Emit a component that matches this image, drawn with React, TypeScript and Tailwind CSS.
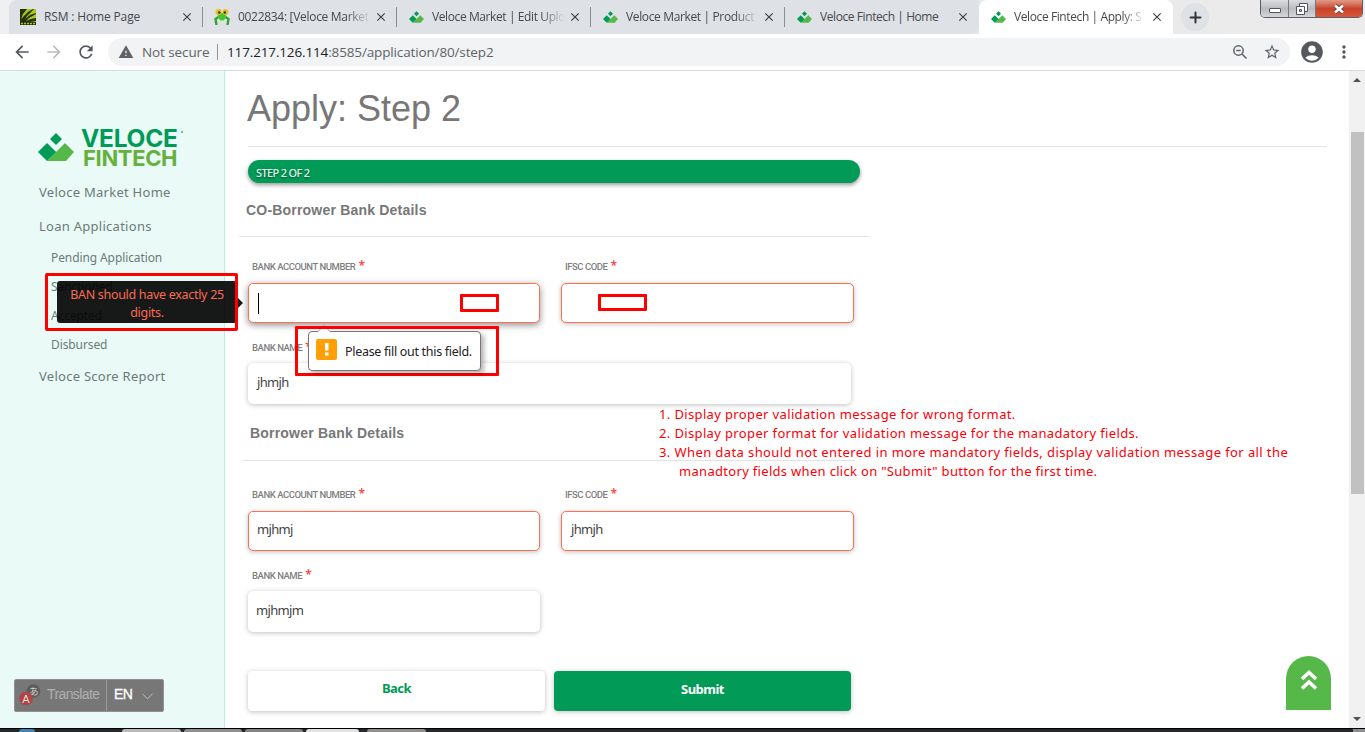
import React from "react";
import { Plus, ChevronDown } from "lucide-react";
import { MdWarning, MdAccountCircle, MdMoreVert, MdArrowBack, MdArrowForward, MdRefresh, MdStarBorder, MdClose } from "react-icons/md";

function VeloceMark({ className }: { className: string }) {
  return (
    <svg viewBox="0 0 36 28" className={className}>
      <path d="M18 0l6 6-6 6-6-6z" fill="#029a57" />
      <path d="M9 28L27 10l9 9-8 9z" fill="#55b848" />
      <path d="M0 19l9-9 9.200 9L9 28z" fill="#029a57" />
    </svg>
  );
}

function LemonIcon() {
  return (
    <svg viewBox="0 0 16 16" className="size-4">
      <path fill="#a8c71a" d="M0 0h16v16H0z" />
      <path fill="#24300a" d="M0 0h7L3 5 1 10l3-3 4-4 5-3h1L7 7 5 10l5-4 6-2v1L9 9l-3 3 5-2 5-1v3l-6 1H0z" />
      <path fill="#26310b" d="M0 13h16v3H0z" />
      <path stroke="#a8c71a" strokeWidth="1.500" d="M1 14.500h2M4 14.500h2M7 14.500h2M10 14.500h2M13 14.500h2" />
    </svg>
  );
}

function MantisIcon() {
  return (
    <svg viewBox="0 0 16 16" className="size-4">
      <path d="M2.500 16L1.500 10l3-2M13.500 16l1-6-3-2" stroke="#35a234" strokeWidth="2.400" fill="none" />
      <path d="M3 4h10l-2 6-3 3-3-3z" fill="#42c72f" />
      <path d="M6 12l2-1 2 1-1 4H7z" fill="#cfe9d0" />
      <circle cx="4.500" cy="3" r="3" fill="#e6c321" />
      <circle cx="11.500" cy="3" r="3" fill="#e6c321" />
      <circle cx="5.200" cy="3.500" r="1.200" fill="#342a08" />
      <circle cx="10.800" cy="3.500" r="1.200" fill="#342a08" />
    </svg>
  );
}

const tabs = [
  { title: "RSM : Home Page", icon: "lemon", spacing: "tracking-[-0.15px]" },
  { title: "0022834: [Veloce Market", icon: "mantis", spacing: "tracking-[-0.3px]" },
  { title: "Veloce Market | Edit Uplo", icon: "veloce", spacing: "tracking-[-0.4px]" },
  { title: "Veloce Market | Product", icon: "veloce", spacing: "tracking-[-0.36px]" },
  { title: "Veloce Fintech | Home", icon: "veloce", spacing: "tracking-[-0.42px]" },
  { title: "Veloce Fintech | Apply: S", icon: "veloce", spacing: "tracking-[-0.4px]", active: true },
];

function TabStrip() {
  return (
    <div className="flex h-[34px] shrink-0 bg-gradient-to-r from-[#eef0f2] via-[#e3e4e6] to-[#ececec] font-['Open_Sans',sans-serif]">
      <div className="flex pl-[9px]">
        {tabs.map((t, i) => (
          <div
            key={t.title}
            className={
              "flex h-[34px] w-[194px] items-center pl-[11px] " +
              (t.active ? "rounded-t-lg bg-white" : "bg-[#dee1e6]") +
              (i === 0 ? " rounded-tl-lg" : "") +
              (i === 4 ? " rounded-br-lg" : "")
            }
          >
            <div className="flex w-4 justify-center">
              {t.icon === "lemon" && <LemonIcon />}
              {t.icon === "mantis" && <MantisIcon />}
              {t.icon === "veloce" && <VeloceMark className="h-[12px] w-[15px]" />}
            </div>
            <div
              className={
                "ml-2 w-[134px] overflow-hidden text-[12px] leading-5 whitespace-nowrap text-[#45494d] " +
                t.spacing +
                (i === 0 || i === 4 ? "" : " [mask-image:linear-gradient(to_right,black_108px,transparent_133px)]")
              }
            >
              {t.title}
            </div>
            <MdClose className="ml-[2px] size-[14px] shrink-0 text-[#3c4043]" />
            <div className={"ml-auto h-5 w-px " + (i < 4 ? "bg-[#8a8d91]" : "")} />
          </div>
        ))}
      </div>
      <div className="mt-[3px] ml-2 flex size-7 items-center justify-center rounded-full bg-[#dee1e6]">
        <Plus className="size-[17px] text-[#303438]" strokeWidth={2.8} />
      </div>
      <div className="mr-[2px] ml-auto flex h-[18px] w-[103px] overflow-hidden rounded-b-[5px] border border-t-0 border-[#5d5f66]">
        <div className="flex w-7 items-center justify-center border-r border-[#77797f] bg-gradient-to-b from-[#dcdde0] via-[#b9bbbf] to-[#d5d6d9]">
          <div className="mt-[3px] h-[5px] w-3 rounded-[1px] border border-[#505462] bg-white" />
        </div>
        <div className="flex w-[27px] items-center justify-center border-r border-[#77797f] bg-gradient-to-b from-[#dcdde0] via-[#b9bbbf] to-[#d5d6d9]">
          <svg viewBox="0 0 12 12" className="size-3">
            <path d="M3.500.5h8v8h-8z" fill="#fff" stroke="#505462" />
            <path d="M.5 3.500h8v8h-8z" fill="#fff" stroke="#505462" />
            <path d="M3.500 6.500h2v2h-2z" fill="#ccc" stroke="#505462" />
          </svg>
        </div>
        <div className="flex flex-1 items-center justify-center bg-gradient-to-b from-[#e09a88] via-[#c8432a] to-[#d9573b]">
          <svg viewBox="0 0 12 10" className="h-[10px] w-3">
            <path d="M2 1.500l8 7M10 1.500l-8 7" stroke="#5b3a40" strokeWidth="4.200" />
            <path d="M2 1.500l8 7M10 1.500l-8 7" stroke="#fff" strokeWidth="2.600" />
          </svg>
        </div>
      </div>
    </div>
  );
}

function Toolbar() {
  return (
    <div className="flex h-[37px] shrink-0 items-center border-b border-[#d9dadd] bg-white font-['Open_Sans',sans-serif]">
      <MdArrowBack className="ml-3 size-5 text-[#55595e]" />
      <MdArrowForward className="ml-3 size-5 text-[#bcbdbf]" />
      <MdRefresh className="ml-3 size-5 text-[#55595e]" />
      <div className="ml-3 flex h-7 w-[1182px] items-center rounded-full bg-[#f1f3f4] pr-[9px] pl-[10px] text-[14px] leading-5 whitespace-nowrap text-[#5f6368]">
        <MdWarning className="size-4" />
        <span className="ml-2 w-[68px] text-[13.500px] tracking-[-0.1px]">Not secure</span>
        <div className="ml-[7px] h-4 w-px bg-[#8f9296]" />
        <span className="ml-[9px] text-[13.500px] tracking-[-0.14px]">
          <span className="text-[#202124]">117.217.126.114</span>:8585/application/80/step2
        </span>
        <svg viewBox="0 0 16 16" className="ml-auto size-4" fill="none" stroke="#5f6368" strokeWidth="1.500">
          <circle cx="6.500" cy="6.500" r="4.700" />
          <path d="M10 10l4.500 4.500M4.300 6.500h4.400" />
        </svg>
        <MdStarBorder className="ml-[15px] size-[18px]" />
      </div>
      <MdAccountCircle className="ml-[9px] size-[26px] text-[#55595e]" />
      <MdMoreVert className="ml-[9px] size-5 text-[#55595e]" />
    </div>
  );
}

function Sidebar() {
  return (
    <aside className="w-[225px] shrink-0 border-r border-[#b5efe5] bg-[#e9faf7] font-['Noto_Sans',sans-serif] text-[#6c7a78]">
      <div className="flex h-[98px] pt-[56px] pl-[38px]">
        <VeloceMark className="mt-[6px] h-[28px] w-[36px]" />
        <div className="ml-[7px] pt-[2px] font-['Inter',sans-serif] whitespace-nowrap">
          <div className="flex text-[24.500px] leading-[19px] font-bold tracking-[-0.25px] text-[#029a57]">
            VELOCE<span className="mt-[2px] ml-[3px] size-[2px] bg-[#6cc79a]" />
          </div>
          <div className="pl-[2px] text-[22px] leading-5 font-bold tracking-[-0.35px] text-[#66b13c]">FINTECH</div>
        </div>
      </div>
      <nav className="flex flex-col pl-[39px] text-[13px] leading-5 tracking-[0.27px] whitespace-nowrap">
        <a className="mt-[13px]">Veloce Market Home</a>
        <a className="mt-[14px]">Loan Applications</a>
        <div className="mt-3 flex flex-col gap-[9px] pl-3 text-[12px] tracking-[-0.1px]">
          <a>Pending Application</a>
          <a>Sanctioned</a>
          <a>Accepted</a>
          <a>Disbursed</a>
        </div>
        <a className="mt-[11px]">Veloce Score Report</a>
      </nav>
    </aside>
  );
}

function Label({ children }: { children: React.ReactNode }) {
  return (
    <div className="flex h-[14px] pl-[5px] font-['Roboto',sans-serif] text-[9.500px] leading-[15px] font-medium tracking-[-0.45px] whitespace-nowrap text-[#7f7f7f]">
      {children}
      <span className="ml-[3px] font-['Noto_Sans',sans-serif] text-[12px] leading-[14px] text-[#f33]">*</span>
    </div>
  );
}

const fieldBase = "flex items-center rounded-[5px] bg-white text-[13px] tracking-[-0.65px] text-[#444] ";
const soft = "shadow-[0_1px_5px_rgba(0,0,0,0.25)] ";

function Main() {
  return (
    <main className="min-w-0 flex-1 bg-white pt-[18px] pl-[22px] font-['Noto_Sans',sans-serif]">
      <h1 className="font-['Liberation_Sans',sans-serif] text-[36px] leading-10 text-[#777]">Apply: Step 2</h1>
      <div className="mt-[17px] ml-px h-px w-[1079px] bg-[#e4e4e4]" />
      <div className="mt-[13px] ml-px flex h-[23px] w-[612px] items-center rounded-full bg-[#029a57] pt-[3px] pl-2 text-[11px] font-medium tracking-[-0.65px] text-[#e2f5ec] shadow-[0_2px_4px_rgba(0,0,0,0.4)] [text-shadow:0_1px_2px_rgba(0,0,0,0.5)]">
        STEP 2 OF 2
      </div>
      <h2 className="mt-[17px] -ml-px font-['Liberation_Sans',sans-serif] text-[14px] leading-5 font-bold tracking-[0.2px] text-[#777]">
        CO-Borrower Bank Details
      </h2>
      <div className="mt-4 -ml-2 h-px w-[630px] bg-[#e2e2e2]" />
      <div className="mt-[22px] flex">
        <div className="w-[313px]"><Label>BANK ACCOUNT NUMBER</Label></div>
        <Label>IFSC CODE</Label>
      </div>
      <div className="mt-[10px] flex gap-[21px] pl-px">
        <div className={fieldBase + "h-10 w-[292px] border border-[#ff6f52] pl-[9px] shadow-[0_2px_7px_rgba(0,0,0,0.45)]"}>
          <div className="h-[21px] w-px bg-black" />
        </div>
        <div className={fieldBase + soft + "h-10 w-[293px] border border-[#ff6f52]"} />
      </div>
      <div className="mt-[17px]"><Label>BANK NAME</Label></div>
      <div className={fieldBase + soft + "mt-[9px] ml-px h-[41px] w-[603px] pb-[2px] pl-[9px]"}>jhmjh</div>
      <h2 className="mt-[19px] pl-[3px] font-['Liberation_Sans',sans-serif] text-[14px] leading-5 font-bold tracking-[0.2px] text-[#777]">
        Borrower Bank Details
      </h2>
      <div className="mt-[17px] -ml-1 h-px w-[612px] bg-[#e2e2e2]" />
      <div className="mt-[26px] flex">
        <div className="w-[313px]"><Label>BANK ACCOUNT NUMBER</Label></div>
        <Label>IFSC CODE</Label>
      </div>
      <div className="mt-[10px] flex gap-[21px] pl-px">
        <div className={fieldBase + soft + "h-10 w-[292px] border border-[#ff6f52] pb-[2px] pl-2"}>mjhmj</div>
        <div className={fieldBase + soft + "h-10 w-[293px] border border-[#ff6f52] pb-[2px] pl-[9px]"}>jhmjh</div>
      </div>
      <div className="mt-[17px]"><Label>BANK NAME</Label></div>
      <div className={fieldBase + soft + "mt-[9px] ml-px h-[41px] w-[292px] pb-[2px] pl-2"}>mjhmjm</div>
      <div className="mt-[39px] ml-px flex gap-[9px] text-[13px] font-bold tracking-[-0.5px]">
        <button className={soft + "h-10 w-[297px] rounded-[4px] bg-white pb-1 text-[#029a57]"}>Back</button>
        <button className={soft + "h-10 w-[297px] rounded-[4px] bg-[#029a57] pb-[2px] text-white"}>Submit</button>
      </div>
    </main>
  );
}

function Scrollbar() {
  return (
    <div className="flex w-4 shrink-0 flex-col items-center bg-[#f1f1f1]">
      <svg viewBox="0 0 8 4" className="mt-[7px] h-1 w-2"><path d="M0 4l4-4 4 4z" fill="#505050" /></svg>
      <div className="mt-[50px] h-[362px] w-[13px] bg-[#c1c1c1]" />
      <svg viewBox="0 0 8 4" className="mt-auto mb-[7px] h-1 w-2"><path d="M0 0l4 4 4-4z" fill="#505050" /></svg>
    </div>
  );
}

function Notes() {
  return (
    <div className="absolute top-[405px] left-[659px] font-['Noto_Sans',sans-serif] text-[13px] leading-[19px] tracking-[0.36px] whitespace-nowrap text-[#fb0007]">
      <div>1. Display proper validation message for wrong format.</div>
      <div>2. Display proper format for validation message for the manadatory fields.</div>
      <div className="tracking-[0.4px]">3. When data should not entered in more mandatory fields, display validation message for all the</div>
      <div className="pl-5 tracking-[0.31px]">manadtory fields when click on "Submit" button for the first time.</div>
    </div>
  );
}

function Overlays() {
  return (
    <>
      <div className="absolute top-[281px] left-[57px] h-[42px] w-[180px] rounded-[3px] bg-black/90 text-center font-['Noto_Sans',sans-serif] text-[12.500px] leading-[18px] tracking-[-0.3px] text-[#f86b52]">
        <div className="pt-[5px]">BAN should have exactly 25<br />digits.</div>
      </div>
      <svg viewBox="0 0 5 10" className="absolute top-[298px] left-[238px] h-[10px] w-[5px]"><path d="M0 0l5 5-5 5z" fill="#191919" /></svg>
      <div className="absolute top-[273px] left-[45px] h-[58px] w-[193px] rounded-[2px] border-3 border-[#f00]" />
      <div className="absolute top-[326px] left-[295px] h-[50px] w-[204px] rounded-[1px] border-3 border-[#f00]" />
      <div className="absolute top-[331px] left-[308px] flex h-10 w-[173px] items-center rounded-[4px] border border-[#777] bg-white pl-[7px] font-['Noto_Sans',sans-serif] text-[12.500px] tracking-[-0.3px] whitespace-nowrap text-[#222] shadow-[3px_3px_5px_rgba(0,0,0,0.3)]">
        <svg viewBox="0 0 21 21" className="-mt-[3px] size-[21px] shrink-0">
          <rect width="21" height="21" rx="2" fill="#ff9f05" />
          <path d="M9 4h3.500v7.500H9zM9 13.500h3.500v3H9z" fill="#fff" />
        </svg>
        <span className="ml-2 pt-[2px]">Please fill out this field.</span>
      </div>
      <svg viewBox="0 0 14 8" className="absolute top-[325px] left-[317px] h-2 w-[14px]">
        <path d="M0 7.500L7 .5l7 7" fill="#fff" stroke="#999" />
        <path d="M1 1h12v3H1z" fill="#f00" />
      </svg>
      <div className="absolute top-[294px] left-[460px] h-[18px] w-[39px] rounded-[1px] border-3 border-[#f00]" />
      <div className="absolute top-[294px] left-[598px] h-[17px] w-[49px] rounded-[1px] border-3 border-[#f00]" />
      <div className="absolute top-[679px] left-[14px] flex h-[33px] w-[150px] items-center rounded-[2px] border border-[#919191] bg-[#777] pb-[2px] font-['Liberation_Sans',sans-serif] text-[14px] text-[#b0b0b0]">
        <svg viewBox="0 0 22 22" className="ml-1 size-[22px]">
          <circle cx="14.500" cy="7" r="6.800" fill="#5d5d5d" />
          <text x="10" y="11" fontSize="9.500" fill="#d0d0d0" fontFamily="Noto Sans CJK JP">あ</text>
          <circle cx="7" cy="14.500" r="6.800" fill="#b04444" />
          <text x="3.300" y="18.500" fontSize="11" fill="#ddd" fontFamily="Liberation Sans">A</text>
        </svg>
        <span className="ml-[6px] w-[53px] tracking-[-0.6px]">Translate</span>
        <div className="-mb-[2px] ml-[6px] h-[31px] w-px bg-[#999]" />
        <span className="ml-[7px] text-[14px] tracking-[-0.5px] text-white [-webkit-text-stroke:0.3px_white]">EN</span>
        <ChevronDown className="mt-[3px] ml-[6px] size-[19px] text-[#c4c4c4]" strokeWidth={1.2} />
      </div>
      <div className="absolute top-[656px] left-[1286px] flex h-[54px] w-[45px] justify-center rounded-t-full bg-[#55b848] pt-[14px]">
        <svg viewBox="0 0 16 20" className="h-5 w-4" fill="none" stroke="#fff" strokeWidth="3.500">
          <path d="M1 9l7-6.500L15 9M1 18.500L8 12l7 6.500" />
        </svg>
      </div>
    </>
  );
}

function Taskbar() {
  return (
    <div className="flex h-1 shrink-0 gap-[3px] border-t border-black bg-[#25292b]">
      <div className="flex w-[119px] justify-center pr-[66px]"><div className="h-[3px] w-4 rounded-t-full bg-[#3f84b4]" /></div>
      <div className="h-[3px] w-[59px] rounded-t bg-[#b9b9b9]" />
      <div className="h-[3px] w-[58px] rounded-t bg-[#8f8f8f]" />
      <div className="h-[3px] w-[58px] rounded-t bg-[#858585]" />
      <div className="h-[3px] w-[53px] rounded-t bg-[#e2e2e2]" />
      <div className="ml-[5px] h-[3px] w-[59px] rounded-t bg-[#928f8c]" />
      <div className="ml-auto h-[3px] w-3 bg-[#8b8f8f]" />
    </div>
  );
}

export default function App() {
  return (
    <div className="relative flex h-[732px] w-[1365px] flex-col overflow-hidden bg-white">
      <TabStrip />
      <Toolbar />
      <div className="flex h-[657px] overflow-hidden">
        <Sidebar />
        <Main />
        <Scrollbar />
      </div>
      <Taskbar />
      <Notes />
      <Overlays />
    </div>
  );
}
